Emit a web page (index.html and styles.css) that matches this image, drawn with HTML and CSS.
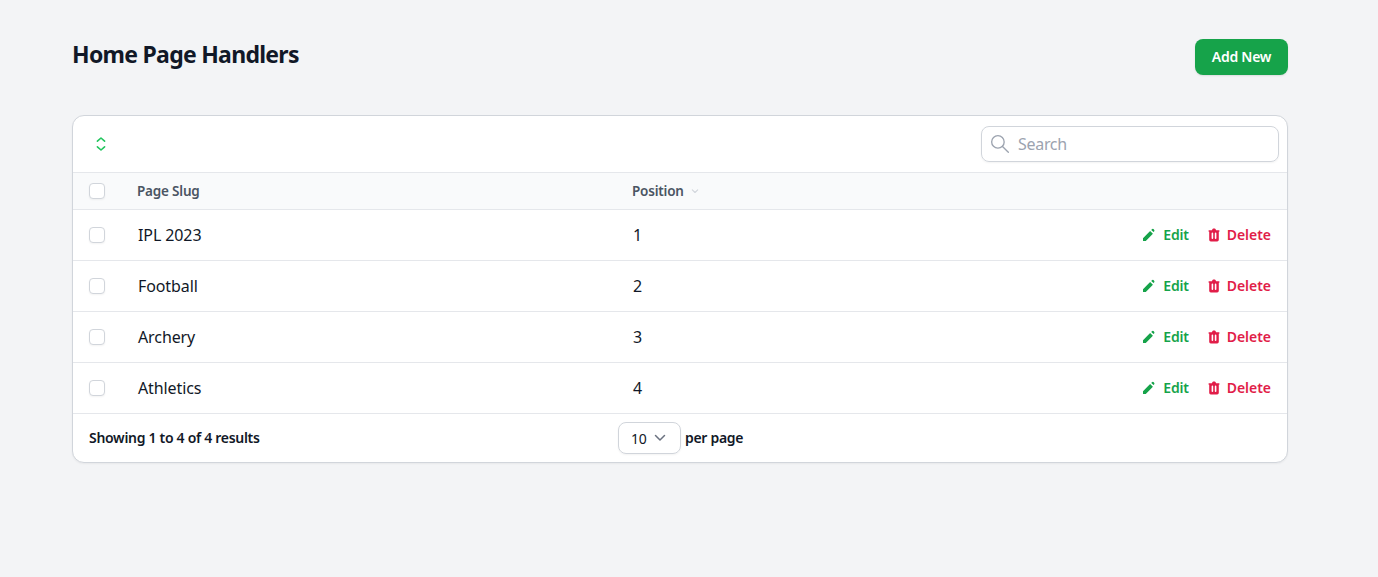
FILE: index.html
```html
<!DOCTYPE html>
<html lang="en">
<head>
<meta charset="utf-8">
<title>Home Page Handlers</title>
<link rel="stylesheet" href="styles.css">
</head>
<body>
<main class="page">
  <header class="page-head">
    <h1 class="title">Home Page Handlers</h1>
    <a class="btn-primary">Add New</a>
  </header>
  <section class="card">
    <div class="toolbar">
      <svg class="toggle" viewBox="0 0 20 20" fill="none" stroke="currentColor" stroke-width="2" stroke-linecap="round" stroke-linejoin="round"><path d="M5.500 6.500 10 2.500 14.500 6.500M5.500 13.500 10 17.500 14.500 13.500"/></svg>
      <label class="search">
        <svg class="search-icon" viewBox="0 0 24 24" fill="none" stroke="currentColor" stroke-width="1.600" stroke-linecap="round"><circle cx="9.500" cy="9.500" r="7.500"/><path d="m15 15 7 7"/></svg>
        <span class="search-text">Search</span>
      </label>
    </div>
    <div class="row row-head">
      <span class="check"></span>
      <span class="col-slug head-label">Page Slug</span>
      <span class="col-pos head-label">Position
        <svg class="sort" viewBox="0 0 20 20" fill="none" stroke="currentColor" stroke-width="1.800" stroke-linecap="round" stroke-linejoin="round"><path d="m5.500 8 4.500 4.500L14.500 8"/></svg>
      </span>
    </div>
    <div class="row row-body">
      <span class="check"></span><span class="col-slug cell">IPL 2023</span><span class="col-pos cell">1</span>
      <div class="actions">
        <a class="action edit"><svg class="action-icon" viewBox="0 0 20 20" fill="currentColor"><path d="M13.600 2.800a2 2 0 0 1 2.800 2.800l-.8.800-2.800-2.800.8-.8zM11.400 5 2.500 14v3.500H6l8.900-9-3.500-3.500z"/></svg><span class="action-label">Edit</span></a>
        <a class="action del"><svg class="action-icon" viewBox="0 0 20 20" fill="currentColor"><path fill-rule="evenodd" d="M9 2a1 1 0 0 0-.9.550L7.400 4H4a1 1 0 0 0 0 2v10a2 2 0 0 0 2 2h8a2 2 0 0 0 2-2V6a1 1 0 1 0 0-2h-3.400l-.7-1.450A1 1 0 0 0 11 2H9zM7 8a1 1 0 0 1 2 0v6a1 1 0 1 1-2 0V8zm5-1a1 1 0 0 0-1 1v6a1 1 0 1 0 2 0V8a1 1 0 0 0-1-1z"/></svg><span class="action-label">Delete</span></a>
      </div>
    </div>
    <div class="row row-body">
      <span class="check"></span><span class="col-slug cell">Football</span><span class="col-pos cell">2</span>
      <div class="actions">
        <a class="action edit"><svg class="action-icon" viewBox="0 0 20 20" fill="currentColor"><path d="M13.600 2.800a2 2 0 0 1 2.800 2.800l-.8.800-2.800-2.800.8-.8zM11.400 5 2.500 14v3.500H6l8.900-9-3.500-3.500z"/></svg><span class="action-label">Edit</span></a>
        <a class="action del"><svg class="action-icon" viewBox="0 0 20 20" fill="currentColor"><path fill-rule="evenodd" d="M9 2a1 1 0 0 0-.9.550L7.400 4H4a1 1 0 0 0 0 2v10a2 2 0 0 0 2 2h8a2 2 0 0 0 2-2V6a1 1 0 1 0 0-2h-3.400l-.7-1.450A1 1 0 0 0 11 2H9zM7 8a1 1 0 0 1 2 0v6a1 1 0 1 1-2 0V8zm5-1a1 1 0 0 0-1 1v6a1 1 0 1 0 2 0V8a1 1 0 0 0-1-1z"/></svg><span class="action-label">Delete</span></a>
      </div>
    </div>
    <div class="row row-body">
      <span class="check"></span><span class="col-slug cell">Archery</span><span class="col-pos cell">3</span>
      <div class="actions">
        <a class="action edit"><svg class="action-icon" viewBox="0 0 20 20" fill="currentColor"><path d="M13.600 2.800a2 2 0 0 1 2.800 2.800l-.8.800-2.800-2.800.8-.8zM11.400 5 2.500 14v3.500H6l8.900-9-3.500-3.500z"/></svg><span class="action-label">Edit</span></a>
        <a class="action del"><svg class="action-icon" viewBox="0 0 20 20" fill="currentColor"><path fill-rule="evenodd" d="M9 2a1 1 0 0 0-.9.550L7.400 4H4a1 1 0 0 0 0 2v10a2 2 0 0 0 2 2h8a2 2 0 0 0 2-2V6a1 1 0 1 0 0-2h-3.400l-.7-1.450A1 1 0 0 0 11 2H9zM7 8a1 1 0 0 1 2 0v6a1 1 0 1 1-2 0V8zm5-1a1 1 0 0 0-1 1v6a1 1 0 1 0 2 0V8a1 1 0 0 0-1-1z"/></svg><span class="action-label">Delete</span></a>
      </div>
    </div>
    <div class="row row-body">
      <span class="check"></span><span class="col-slug cell">Athletics</span><span class="col-pos cell">4</span>
      <div class="actions">
        <a class="action edit"><svg class="action-icon" viewBox="0 0 20 20" fill="currentColor"><path d="M13.600 2.800a2 2 0 0 1 2.800 2.800l-.8.800-2.800-2.800.8-.8zM11.400 5 2.500 14v3.500H6l8.900-9-3.500-3.500z"/></svg><span class="action-label">Edit</span></a>
        <a class="action del"><svg class="action-icon" viewBox="0 0 20 20" fill="currentColor"><path fill-rule="evenodd" d="M9 2a1 1 0 0 0-.9.550L7.400 4H4a1 1 0 0 0 0 2v10a2 2 0 0 0 2 2h8a2 2 0 0 0 2-2V6a1 1 0 1 0 0-2h-3.400l-.7-1.450A1 1 0 0 0 11 2H9zM7 8a1 1 0 0 1 2 0v6a1 1 0 1 1-2 0V8zm5-1a1 1 0 0 0-1 1v6a1 1 0 1 0 2 0V8a1 1 0 0 0-1-1z"/></svg><span class="action-label">Delete</span></a>
      </div>
    </div>
    <footer class="foot">
      <span class="foot-left">Showing 1 to 4 of 4 results</span>
      <div class="per-page">
        <span class="select">10<svg class="select-arrow" viewBox="0 0 20 20" fill="none" stroke="currentColor" stroke-width="1.500" stroke-linecap="round" stroke-linejoin="round"><path d="m5.500 7.500 4.500 4.500 4.500-4.500"/></svg></span>
        <span class="per-label">per page</span>
      </div>
    </footer>
  </section>
</main>
</body>
</html>
```
FILE: styles.css
```css
* { box-sizing: border-box; }
html, body { margin: 0; height: 100%; }
body {
  background: #f3f4f6;
  color: #111827;
  font-family: "Noto Sans", "Open Sans", sans-serif;
}
.page { padding: 39px 90px 0 72px; }
.page-head {
  display: flex;
  justify-content: space-between;
  align-items: flex-start;
  margin-bottom: 40px;
}
.title {
  margin: 0;
  font-size: 23px;
  line-height: 30px;
  font-weight: 700;
  letter-spacing: -0.72px;
}
.btn-primary {
  display: flex;
  align-items: center;
  justify-content: center;
  width: 93px;
  height: 36px;
  padding-bottom: 2px;
  border-radius: 8px;
  background: #16a34a;
  color: #fff;
  font-size: 14px;
  font-weight: 600;
  letter-spacing: -0.25px;
  box-shadow: 0 1px 2px rgba(0,0,0,.1);
}
.card {
  width: 1216px;
  background: #fff;
  border: 1px solid #d1d5db;
  border-radius: 12px;
  box-shadow: 0 1px 2px rgba(0,0,0,.05);
  overflow: hidden;
}
.toolbar {
  display: flex;
  align-items: center;
  justify-content: space-between;
  height: 57px;
  padding: 0 8px 0 20px;
  border-bottom: 1px solid #e5e7eb;
}
.toggle { width: 16px; height: 16px; color: #22c55e; }
.search {
  display: flex;
  align-items: center;
  width: 298px;
  height: 36px;
  border: 1px solid #d1d5db;
  border-radius: 8px;
  padding-left: 8px;
  box-shadow: 0 1px 2px rgba(0,0,0,.05);
}
.search-icon { width: 20px; height: 20px; color: #9ca3af; margin-right: 8px; }
.search-text { font-size: 16px; color: #9ca3af; letter-spacing: -0.3px; }
.row {
  display: flex;
  align-items: center;
  padding-left: 16px;
  border-bottom: 1px solid #e5e7eb;
}
.row-head { height: 37px; background: #f9fafb; }
.row-body { height: 51px; }
.check {
  width: 16px;
  height: 16px;
  flex: none;
  background: #fff;
  border: 1px solid #d1d5db;
  border-radius: 4px;
  box-shadow: 0 1px 2px rgba(0,0,0,.05);
}
.col-slug { width: 495px; margin-left: 33px; flex: none; }
.col-pos { display: flex; align-items: center; flex: none; }
.head-label {
  font-size: 13.500px;
  font-weight: 600;
  color: #4b5563;
  letter-spacing: -0.2px;
}
.row-head .col-slug { margin-left: 32px; }
.sort { width: 12px; height: 12px; margin-left: 5px; color: #d1d5db; }
.cell { font-size: 16px; color: #111827; letter-spacing: -0.1px; }
.actions {
  margin-left: auto;
  display: flex;
  align-items: center;
  gap: 17px;
  padding-right: 16px;
}
.action {
  display: flex;
  align-items: center;
  gap: 5px;
  font-size: 14px;
  font-weight: 600;
  letter-spacing: -0.03px;
}
.action-label { padding-bottom: 2px; }
.action-icon { width: 16px; height: 16px; }
.edit { color: #16a34a; gap: 6px; letter-spacing: -0.2px; }
.del { color: #e11d48; }
.foot {
  display: flex;
  align-items: center;
  height: 48px;
  padding: 0 0 2px 16px;
  font-size: 14px;
  font-weight: 600;
  letter-spacing: -0.3px;
}
.foot-left { width: 529px; flex: none; }
.per-page { display: flex; align-items: center; gap: 4px; }
.select {
  display: flex;
  align-items: center;
  justify-content: space-between;
  width: 63px;
  height: 32px;
  padding: 0 10px 0 12px;
  margin-top: 2px;
  border: 1px solid #d1d5db;
  border-radius: 8px;
  font-weight: 400;
  box-shadow: 0 1px 2px rgba(0,0,0,.05);
}
.select-arrow { width: 20px; height: 20px; color: #6b7280; flex: none; }
```
